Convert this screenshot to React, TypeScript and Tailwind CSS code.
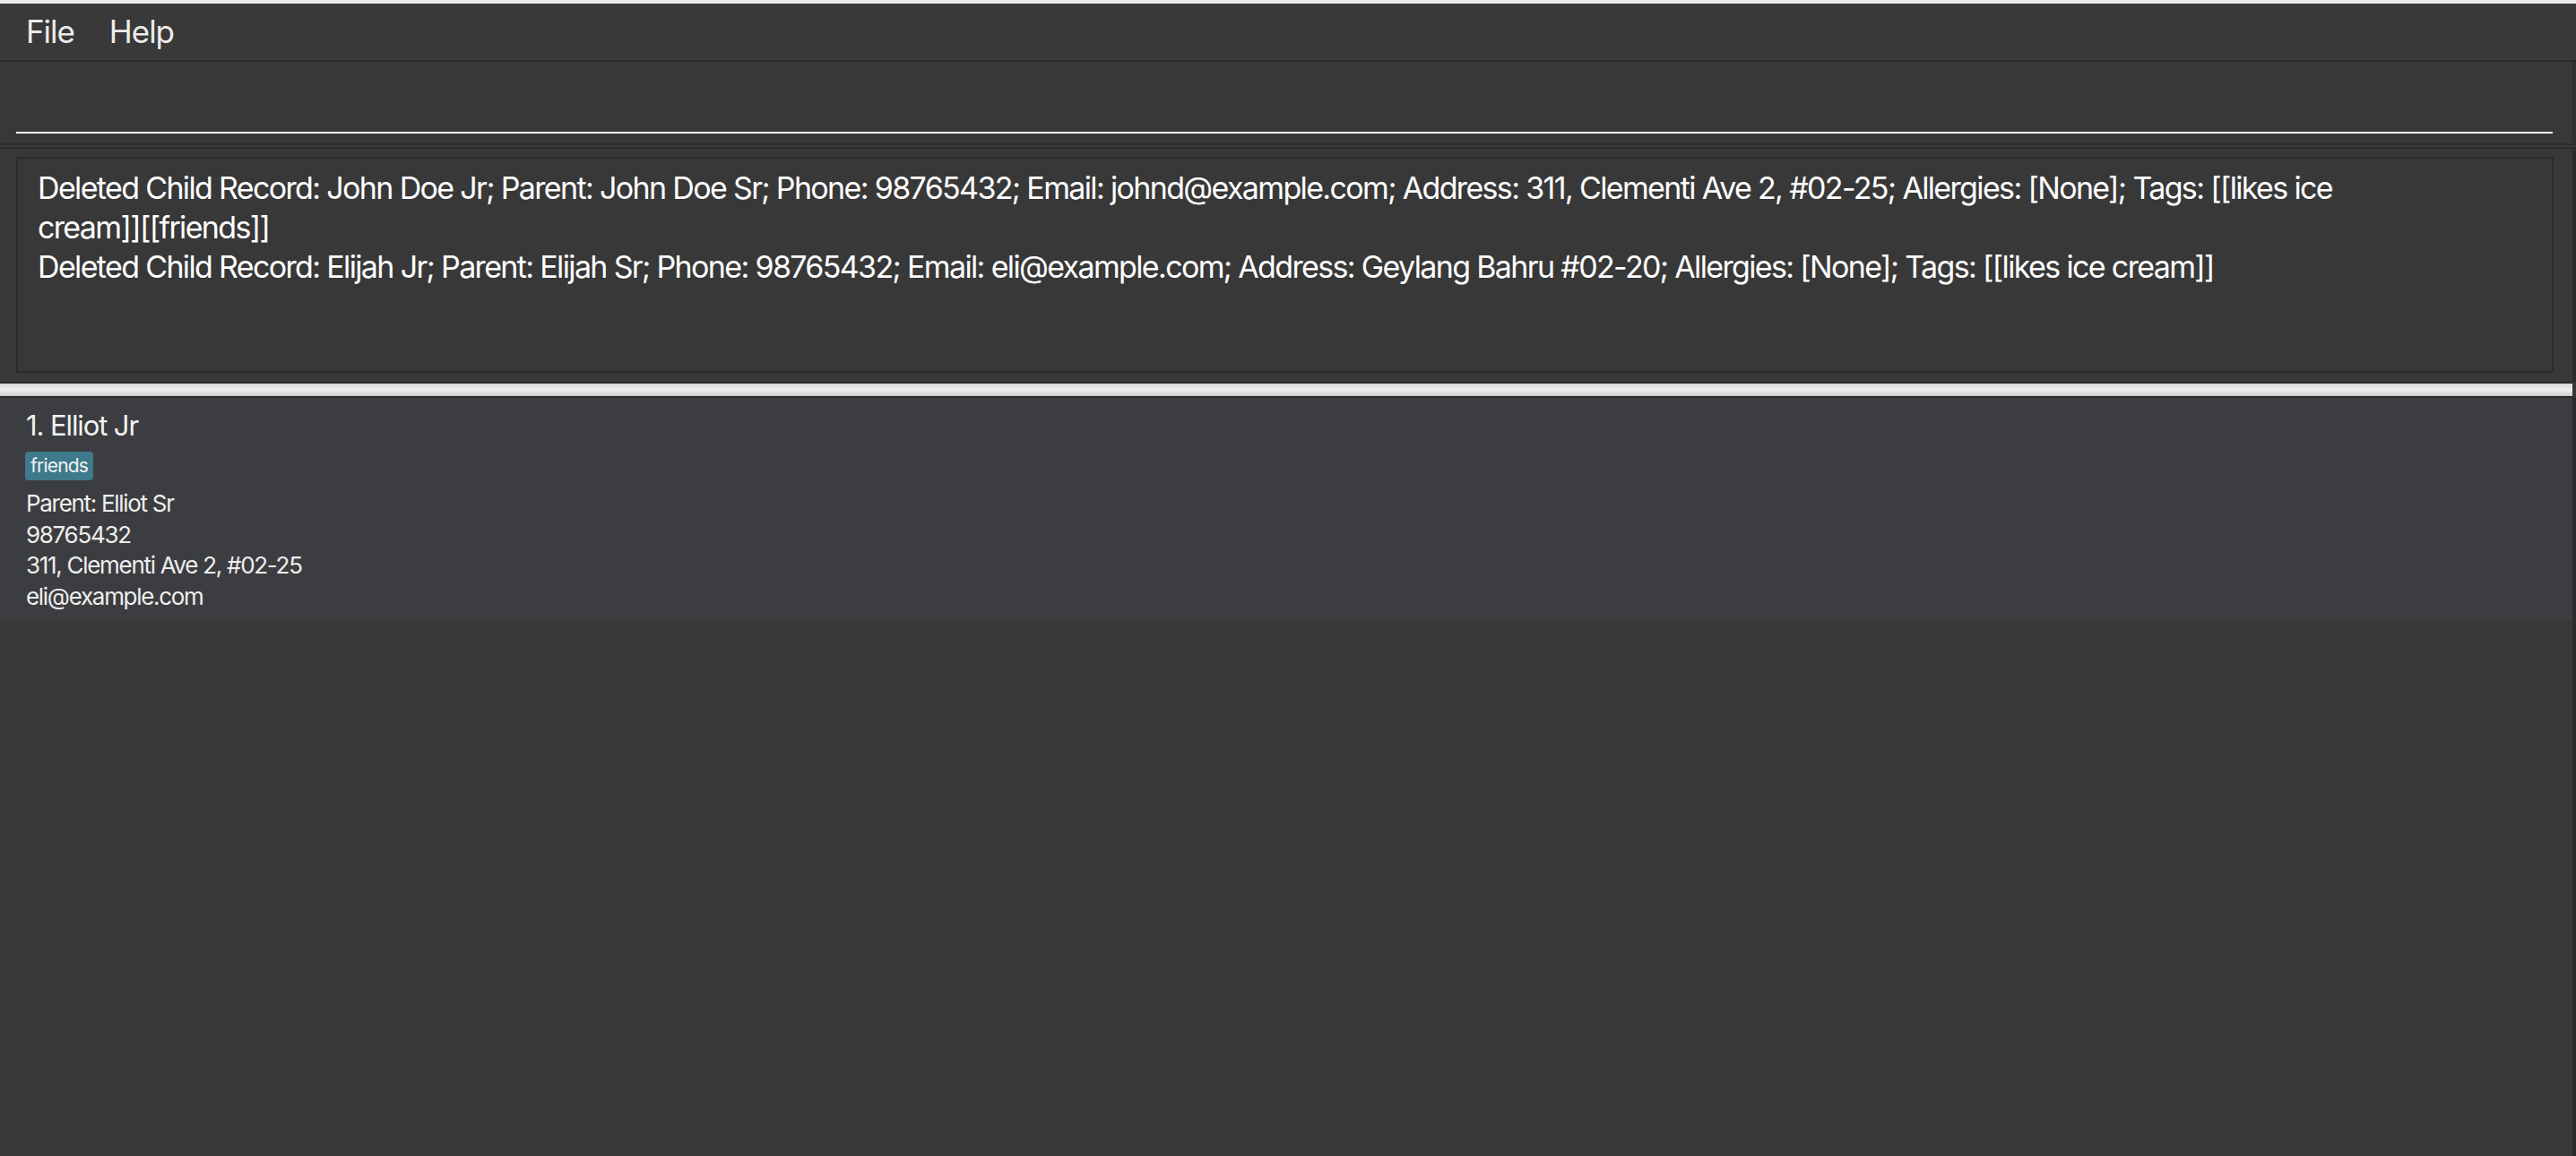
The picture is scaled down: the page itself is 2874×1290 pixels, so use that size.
import React from 'react';

type Child = {
  name: string;
  parent: string;
  phone: string;
  address: string;
  email: string;
  tags: string[];
};

const children: Child[] = [
  {
    name: 'Elliot Jr',
    parent: 'Elliot Sr',
    phone: '98765432',
    address: '311, Clementi Ave 2, #02-25',
    email: 'eli@example.com',
    tags: ['friends'],
  },
];

const resultLines = [
  'Deleted Child Record: John Doe Jr; Parent: John Doe Sr; Phone: 98765432; Email: johnd@example.com; Address: 311, Clementi Ave 2, #02-25; Allergies: [None]; Tags: [[likes ice',
  'cream]][[friends]]',
  'Deleted Child Record: Elijah Jr; Parent: Elijah Sr; Phone: 98765432; Email: eli@example.com; Address: Geylang Bahru #02-20; Allergies: [None]; Tags: [[likes ice cream]]',
];

const font = { fontFamily: 'Inter, "Noto Sans", sans-serif' };

const App: React.FC = () => {
  return (
    <div
      className="w-full h-[1290px] bg-[#383838] text-white flex flex-col border-t-4 border-[#ececec] overflow-hidden"
      style={font}
    >
      {/* Menu bar */}
      <div className="h-[65px] shrink-0 flex items-center gap-[39px] pl-[29px] border-b-2 border-[#2b2b2b] bg-[#393939] text-[35px] text-[#ececec] tracking-[-0.03em]">
        <span>File</span>
        <span>Help</span>
      </div>

      {/* Command box */}
      <div className="h-[93px] shrink-0 flex items-end pl-[18px] pr-[22px] pb-[11px] border-b-2 border-[#2b2b2b] border-r-4 border-r-[#2f2f2f]">
        <div className="w-full h-[2px] bg-white" />
      </div>

      {/* Result display */}
      <div className="h-[262px] shrink-0 mt-[2px] border-t-2 border-[#2b2b2b] border-r-4 border-r-[#2b2b2b] pl-[18px] pr-[21px] pt-[9px] pb-[10px]">
        <div className="h-full border-2 border-[#2b2b2b] pl-[22px] pr-[20px] pt-[11px] text-[34px] leading-[44px] tracking-[-1.65px] whitespace-nowrap">
          {resultLines.map((r, i) => (
            <div key={i}>{r}</div>
          ))}
        </div>
      </div>

      {/* Splitter */}
      <div className="h-[18px] shrink-0 border-y-2 border-[#2b2b2b] bg-gradient-to-b from-[#d6d6d6] via-[#f0f0f0] to-[#c9c9c9] mr-[4px]" />

      {/* Child list */}
      <div className="flex-1 border-r-4 border-[#2b2b2b]">
        {children.map((c, i) => (
          <div key={i} className="bg-[#3c3d40] pl-[29px] pt-[11px] pb-[9px]">
            <div className="text-[31px] leading-[40px] text-[#f2f2f2] tracking-[-1.1px]">
              {i + 1}. {c.name}
            </div>
            <div className="flex gap-2 mt-[9px]">
              {c.tags.map((t) => (
                <span
                  key={t}
                  className="h-[32px] -ml-px flex items-center px-[6px] rounded-[4px] bg-[#3e7a8c] text-[21px] text-[#f2f2f2] tracking-[-0.8px]"
                >
                  {t}
                </span>
              ))}
            </div>
            <div className="mt-[9px] text-[26px] leading-[34.5px] text-[#eeeeee] tracking-[-1.3px]">
              <div>Parent: {c.parent}</div>
              <div>{c.phone}</div>
              <div>{c.address}</div>
              <div>{c.email}</div>
            </div>
          </div>
        ))}
      </div>
    </div>
  );
};

export default App;
